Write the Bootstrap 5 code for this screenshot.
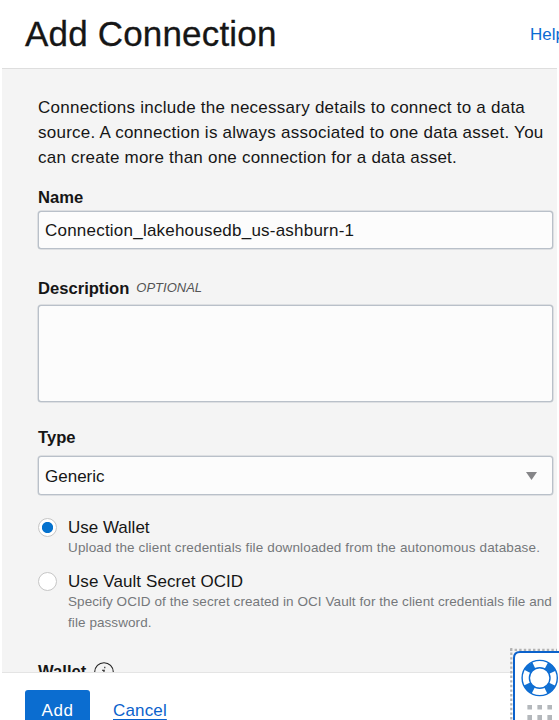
<!DOCTYPE html>
<html lang="en">
<head>
<meta charset="utf-8">
<meta name="viewport" content="width=device-width, initial-scale=1">
<title>Add Connection</title>
<link href="https://cdn.jsdelivr.net/npm/bootstrap@5.3.0/dist/css/bootstrap.min.css" rel="stylesheet">
<style>
body{font-family:"Liberation Sans",Arial,sans-serif;font-size:17px;color:#161616;height:720px;overflow:hidden;background:#fff}
.top-bar{height:68px;padding-left:25px;white-space:nowrap}
.top-bar h1{font-size:35px;line-height:40px;letter-spacing:.18px;font-weight:400;color:#161616;-webkit-text-stroke:.3px #161616}
.help-link{margin-left:auto;margin-right:-6px;font-size:17px;color:#0b6bd3;margin-top:2px}
.panel-body{height:605px;margin:0 2px;border-top:1px solid #dedede;background:#f4f4f4;border-bottom:1px solid #e4e4e4;overflow:hidden;padding:26px 4px 0 36px}
.intro{line-height:25px;height:76px;white-space:nowrap;letter-spacing:.25px}
.intro .last{letter-spacing:.22px}
.field-label{font-weight:700;font-size:16.6px;line-height:20px;display:block;color:#161616}
.panel-body .form-control,.panel-body .form-select{border:1px solid #b9c0c9;box-shadow:0 0 0 .5px #c5cad0;background-color:#fcfcfc;border-radius:3px;font-size:17px;color:#161616;padding:2px 6px 0;resize:none}
.panel-body .form-control{letter-spacing:.22px}
.panel-body .form-select{background-image:url("data:image/svg+xml,%3Csvg xmlns='http://www.w3.org/2000/svg' viewBox='0 0 11 8'%3E%3Cpath d='M0 0h11L5.5 8z' fill='%23858588'/%3E%3C/svg%3E");background-size:11px 8px;background-position:right 15px center}
.choice{display:grid;grid-template-columns:30px 1fr;line-height:20px}
.choice .form-check-input{width:19px;height:19px;margin:0;border:1px solid #c6c6c6;background-color:#fff}
.choice .form-check-input:checked{background-image:radial-gradient(circle,#0572ce 5.2px,transparent 6px)}
.hint{font-size:13.5px;line-height:21px;color:#75787b;white-space:nowrap;letter-spacing:.075px}
.hint-wide{letter-spacing:.14px}
.optional{font-size:13px;line-height:18px;color:#545454;font-style:italic;margin-left:7px;margin-bottom:2px}
.btn-add{width:65px;height:42px;background:#0b6dd0;color:#fff;border-radius:3px;font-size:17px;padding:0;line-height:38px;letter-spacing:.6px}
.cancel{color:#0b62cc;font-size:17px;line-height:42px;text-underline-offset:3px;letter-spacing:.15px}
.support{position:absolute;left:510px;top:648px;width:49px;height:72px}
</style>
</head>
<body class="position-relative">
<header class="top-bar d-flex align-items-center overflow-hidden">
  <h1 class="m-0">Add Connection</h1>
  <a class="help-link text-decoration-none" href="#">Help</a>
</header>
<main class="panel-body">
  <p class="intro m-0">Connections include the necessary details to connect to a data<br>source. A connection is always associated to one data asset. You<br><span class="last">can create more than one connection for a data asset.</span></p>
  <label class="field-label" for="name" style="margin-top:17px">Name</label>
  <input id="name" class="form-control" style="height:38px;margin-top:3px" value="Connection_lakehousedb_us-ashburn-1">
  <div class="d-flex align-items-center" style="margin-top:30px;height:20px"><label class="field-label" for="desc">Description</label><span class="optional">OPTIONAL</span></div>
  <textarea id="desc" class="form-control d-block" style="height:97px;min-height:0;margin-top:6px"></textarea>
  <label class="field-label" for="type" style="margin-top:26px">Type</label>
  <select id="type" class="form-select" style="height:39px;margin-top:8px"><option>Generic</option></select>
  <div class="choice" style="margin-top:23px">
    <input class="form-check-input" type="radio" name="cred" id="wallet" checked><label for="wallet">Use Wallet</label>
    <span></span><span class="hint hint-wide" style="margin-top:-1px">Upload the client credentials file downloaded from the autonomous database.</span>
  </div>
  <div class="choice" style="margin-top:14px">
    <input class="form-check-input" type="radio" name="cred" id="vault"><label for="vault" style="letter-spacing:.08px">Use Vault Secret OCID</label>
    <span></span><span class="hint" style="margin-top:-1px">Specify OCID of the secret created in OCI Vault for the client credentials file and<br>file password.</span>
  </div>
  <div class="d-flex align-items-start" style="margin-top:29px"><span class="field-label">Wallet</span>
    <svg class="ms-2" width="20" height="20" viewBox="0 0 20 20" fill="none" stroke="#222" stroke-width="1.1"><circle cx="10" cy="10" r="9.3"/><path d="M8 8.2h2.2L9 14.5h2M10.8 4.8v1.4"/></svg>
  </div>
</main>
<footer class="d-flex align-items-start" style="padding:17px 25px 0;gap:23px">
  <button class="btn btn-add" type="button">Add</button>
  <a class="cancel" href="#">Cancel</a>
</footer>
<div class="support">
<svg width="49" height="72" viewBox="0 0 49 72" fill="none">
  <path d="M0 1.8H47M1.3 0V72" stroke="#b3b3b3" stroke-width="2.2" stroke-dasharray="2.4 2.2"/>
  <path d="M4 74V10Q4 4 10 4H51V74Z" fill="#fff" stroke="#0b62cc" stroke-width="2"/>
  <circle cx="29.7" cy="30" r="14" stroke="#1170d2" stroke-width="7" stroke-dasharray="9 12.991" stroke-dashoffset="15.5"/>
  <circle cx="29.7" cy="30" r="17.6" stroke="#0b6bd3" stroke-width="1.4"/><circle cx="29.7" cy="30" r="10.3" stroke="#0b6bd3" stroke-width="1.4"/>
  <path d="M17.4 57h4.6v4.6h-4.6zM27.4 57h4.6v4.6h-4.6zM37.4 57h4.6v4.6h-4.6zM17.4 67h4.6v5h-4.6zM27.4 67h4.6v5h-4.6zM37.4 67h4.6v5h-4.6z" fill="#b4b8bc"/>
</svg>
</div>
<script src="https://cdn.jsdelivr.net/npm/bootstrap@5.3.0/dist/js/bootstrap.bundle.min.js"></script>
</body>
</html>
